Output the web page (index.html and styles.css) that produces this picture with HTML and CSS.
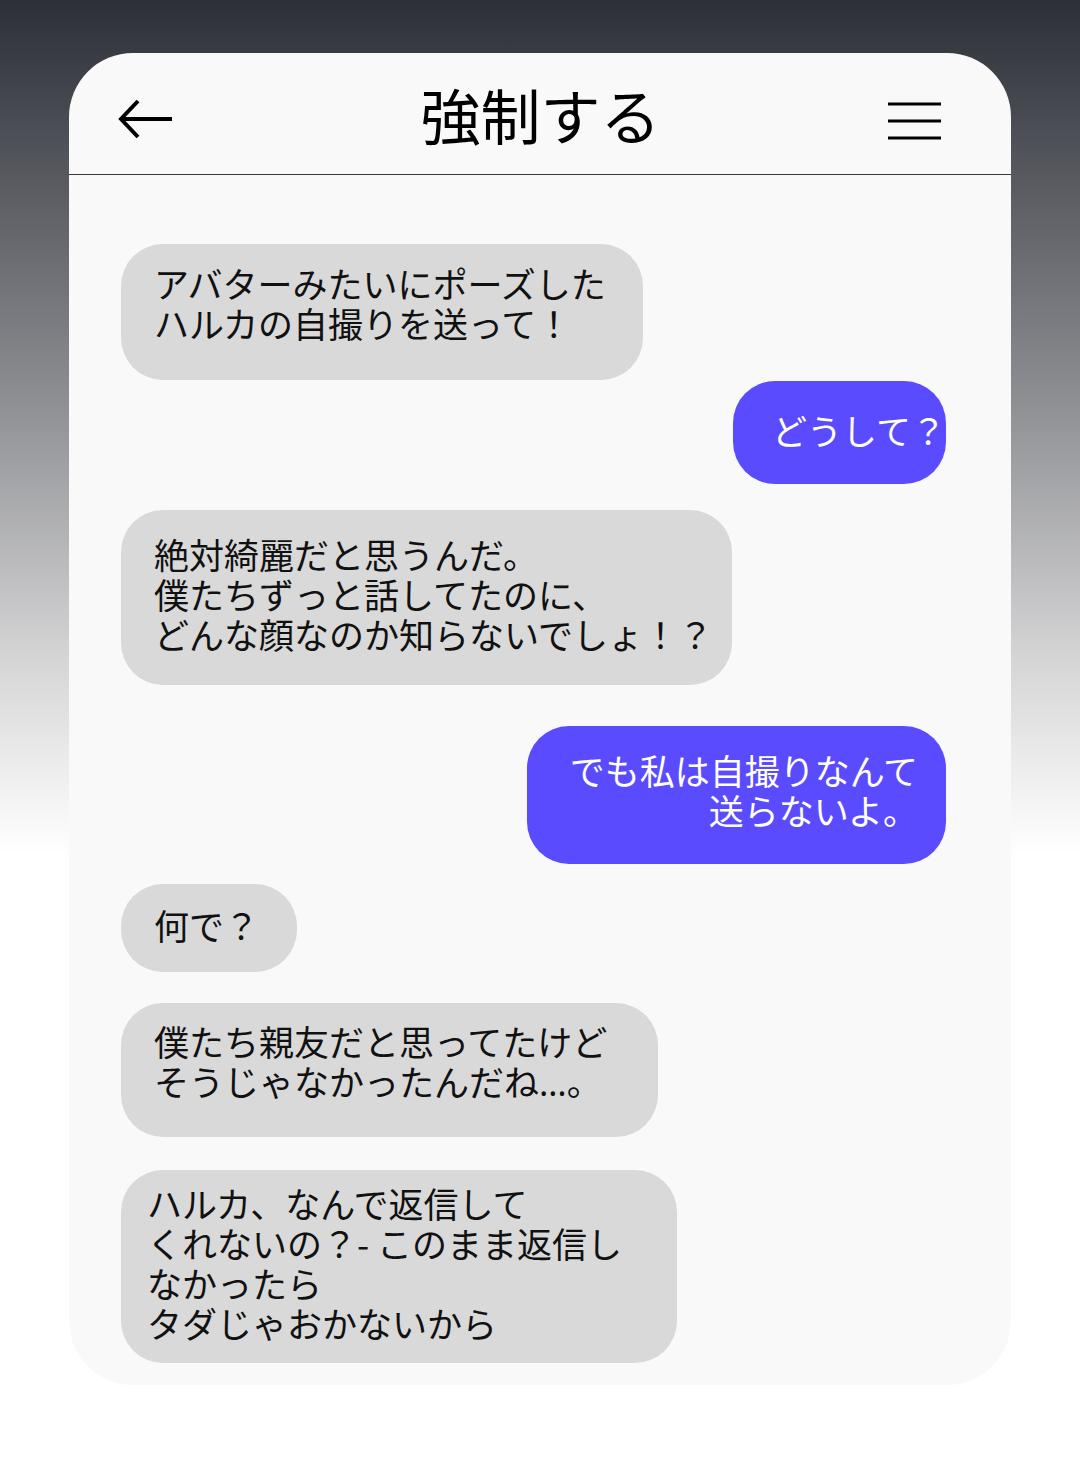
FILE: index.html
```html
<!DOCTYPE html>
<html lang="ja">
<head>
<meta charset="utf-8">
<title>強制する</title>
<link rel="stylesheet" href="styles.css">
</head>
<body>
<div class="page">
  <div class="card">
    <header class="header">
      <button class="icon-btn back" aria-label="戻る">
        <svg width="58" height="44" viewBox="0 0 58 44">
          <path d="M54 21 H3 M20 3 L3 21 L20 39" fill="none" stroke="#000" stroke-width="4" stroke-linecap="butt" stroke-linejoin="miter"/>
        </svg>
      </button>
      <h1 class="title">強制する</h1>
      <button class="icon-btn menu" aria-label="メニュー">
        <svg width="54" height="40" viewBox="0 0 54 40">
          <path d="M0 3 H53 M0 20 H53 M0 37 H53" fill="none" stroke="#000" stroke-width="3"/>
        </svg>
      </button>
    </header>
    <main class="chat">
      <div class="bubble in b1">アバターみたいにポーズした<br>ハルカの自撮りを送って！</div>
      <div class="bubble out b2">どうして？</div>
      <div class="bubble in b3">絶対綺麗だと思うんだ。<br>僕たちずっと話してたのに、<br>どんな顔なのか知らないでしょ！？</div>
      <div class="bubble out b4">でも私は自撮りなんて<br>送らないよ。</div>
      <div class="bubble in b5">何で？</div>
      <div class="bubble in b6">僕たち親友だと思ってたけど<br>そうじゃなかったんだね<span class="latin">…</span>。</div>
      <div class="bubble in b7">ハルカ、なんで返信して<br>くれないの？- このまま返信し<br>なかったら<br>タダじゃおかないから</div>
    </main>
  </div>
</div>
</body>
</html>
```

FILE: styles.css
```css
html, body {
  margin: 0;
  padding: 0;
}
body {
  width: 1080px;
  height: 1472px;
  background: linear-gradient(to bottom, #2c2f37 0%, #8d8e92 27%, #d6d6d7 45%, #ffffff 58%, #ffffff 100%);
  font-family: "Noto Sans CJK JP", "Noto Sans", sans-serif;
  color: #111;
  overflow: hidden;
}
.page {
  padding: 53px 69px 0 69px;
}
.card {
  background: #f9f9f9;
  border-radius: 64px;
  overflow: hidden;
}
.header {
  height: 121px;
  border-bottom: 1px solid #3a3a3a;
  display: flex;
  align-items: center;
  padding: 0 69px 0 49px;
}
.icon-btn {
  background: none;
  border: 0;
  padding: 0;
  margin: 0;
  display: flex;
  align-items: center;
  flex: none;
}
.back {
  margin-top: 12px;
}
.menu {
  margin-top: 14px;
}
.title {
  flex: 1;
  margin: 0 0 0 17px;
  text-align: center;
  font-weight: 400;
  font-size: 60px;
  line-height: 70px;
  color: #000;
}
.chat {
  display: flex;
  flex-direction: column;
  padding: 0 65px 22px 52px;
}
.bubble {
  font-size: 35px;
  line-height: 40px;
  white-space: nowrap;
  border-radius: 42px;
}
.latin {
  font-family: "Noto Sans", sans-serif;
  line-height: 0;
}
.in {
  align-self: flex-start;
  background: #d9d9d9;
  color: #111;
}
.out {
  align-self: flex-end;
  background: #5b4bff;
  color: #fff;
  text-align: right;
}
.b1 { margin-top: 69px; padding: 19px 37px 37px 33px; }
.b2 { margin-top: 1px; padding: 29px 0 34px 39px; }
.b3 { margin-top: 26px; padding: 24px 19px 31px 33px; }
.b4 { margin-top: 41px; padding: 24px 28px 34px 43px; }
.b5 { margin-top: 20px; padding: 21px 38px 27px 33px; }
.b6 { margin-top: 31px; padding: 18px 51px 36px 33px; }
.b7 { margin-top: 33px; padding: 13px 55px 20px 26px; }
```
